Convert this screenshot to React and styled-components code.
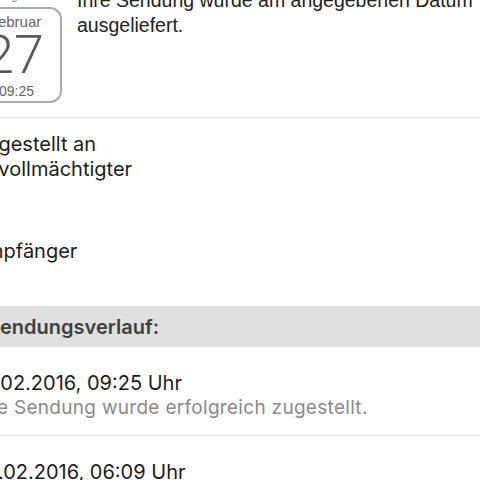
import React from "react";
import styled, { createGlobalStyle } from "styled-components";

const GlobalStyle = createGlobalStyle`
  html, body {
    margin: 0;
    padding: 0;
    background: #fff;
    overflow: hidden;
  }
`;

// the view is scrolled / cropped, so the screen starts left of and above the window
const Screen = styled.div`
  width: 560px;
  margin-left: -26px;
  margin-top: -12px;
  font-family: Inter, "Noto Sans", sans-serif;
  color: #1c1c1c;
`;

const StatusRow = styled.div`
  display: flex;
  gap: 15px;
  align-items: flex-start;
  padding-bottom: 14px;
  border-bottom: 1px solid #e3e3e3;
`;

const CalendarCol = styled.div`
  display: flex;
  flex-direction: column;
  width: 88px;
  flex-shrink: 0;
`;

const Weekday = styled.div`
  font-family: "Liberation Sans", Arial, sans-serif;
  font-size: 11px;
  line-height: 16px;
  height: 16px;
  margin-bottom: 3px;
  color: #777;
`;

const CalendarBox = styled.div`
  box-sizing: border-box;
  height: 96px;
  border: 2px solid #ababab;
  border-radius: 12px;
  display: flex;
  flex-direction: column;
  align-items: center;
  padding-top: 5px;
  font-family: "Liberation Sans", Arial, sans-serif;
  color: #666;
`;

const Month = styled.div`
  font-size: 15px;
  line-height: 16px;
  margin-left: -6px;
`;

const Day = styled.div`
  font-family: Roboto, Lato, "Liberation Sans", sans-serif;
  font-weight: 300;
  font-size: 54px;
  line-height: 44px;
  margin-top: 3px;
  margin-left: -8px;
  color: #5a5a5a;
`;

const Time = styled.div`
  font-size: 14px;
  line-height: 16px;
  margin-top: 6px;
  margin-left: -3px;
`;

const StatusText = styled.div`
  flex: 1;
  font-family: "Liberation Sans", Arial, sans-serif;
  font-size: 19.5px;
  line-height: 24.5px;
  color: #222;
`;

const Recipient = styled.div`
  padding-top: 14px;
  height: 188px;
  box-sizing: border-box;
`;

const Line = styled.div`
  font-size: 20px;
  line-height: 25px;
`;

const Block = styled.div`
  margin-top: ${(p) => p.$gap || 0}px;
`;

const SectionHeader = styled.div`
  box-sizing: border-box;
  height: 41px;
  padding: 2px 0 0 13px;
  background: #e0e0e0;
  font-size: 20px;
  font-weight: 600;
  line-height: 39px;
  color: #3f3f3f;
`;

const Entry = styled.div`
  padding: 26px 0 17px;
  border-bottom: 1px solid #e3e3e3;
`;

const EntryTitle = styled.div`
  font-size: 20px;
  line-height: 21px;
  color: #1c1c1c;
`;

const EntryText = styled.div`
  font-size: 19px;
  line-height: 20px;
  letter-spacing: 0.3px;
  margin: 4px 0 0 4px;
  color: #8a8a8a;
`;

const history = [
  {
    id: 1,
    date: "27.02.2016, 09:25 Uhr",
    text: "Die Sendung wurde erfolgreich zugestellt.",
  },
  {
    id: 2,
    date: "26.02.2016, 06:09 Uhr",
    text: "Die Sendung wurde in das Zustellfahrzeug geladen.",
  },
];

const App = () => {
  return (
    <>
      <GlobalStyle />
      <Screen>
        <StatusRow>
          <CalendarCol>
            <Weekday>Samstag</Weekday>
            <CalendarBox>
              <Month>Februar</Month>
              <Day>27</Day>
              <Time>09:25</Time>
            </CalendarBox>
          </CalendarCol>
          <StatusText>
            Ihre Sendung wurde am angegebenen Datum ausgeliefert.
          </StatusText>
        </StatusRow>

        <Recipient>
          <Block>
            <Line>Zugestellt an</Line>
            <Line>Bevollmächtigter</Line>
          </Block>
          <Block $gap={57}>
            <Line>Empfänger</Line>
          </Block>
        </Recipient>

        <SectionHeader>Sendungsverlauf:</SectionHeader>

        {history.map((item) => (
          <Entry key={item.id}>
            <EntryTitle>{item.date}</EntryTitle>
            <EntryText>{item.text}</EntryText>
          </Entry>
        ))}
      </Screen>
    </>
  );
};

export default App;
